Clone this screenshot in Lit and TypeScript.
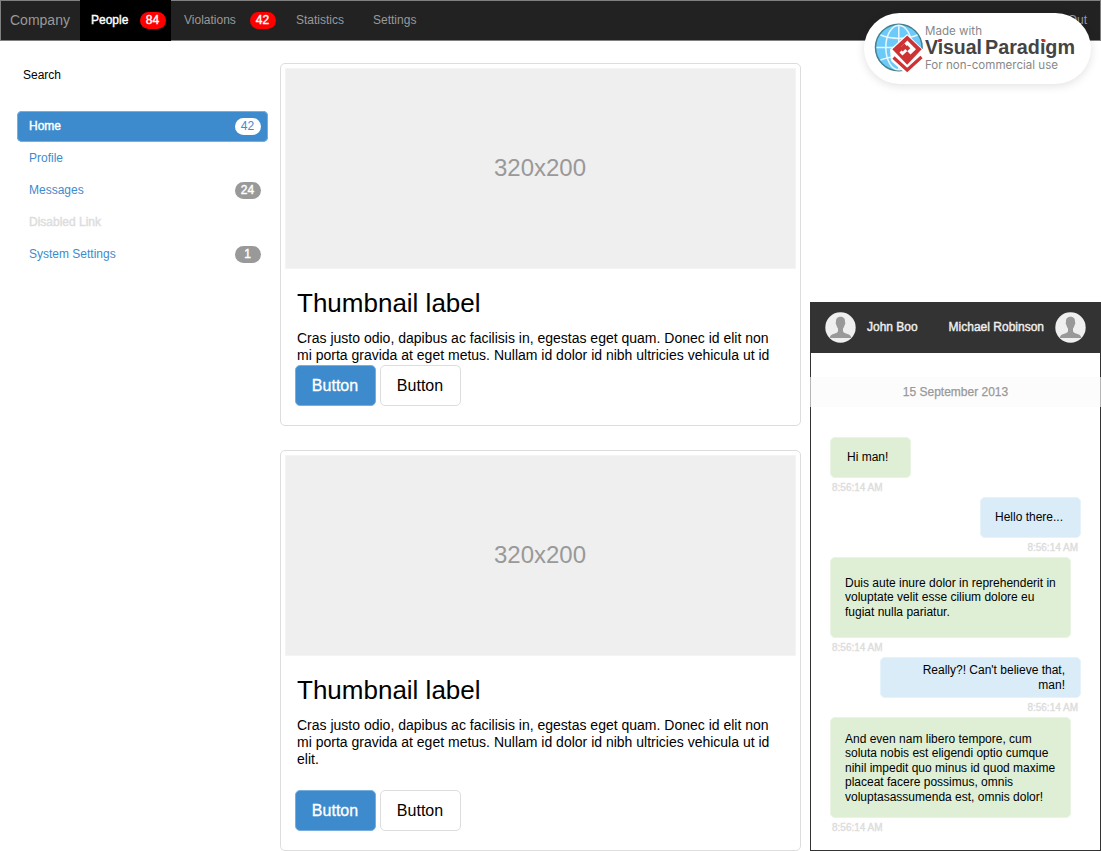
import { LitElement, html, css, svg, nothing } from "lit";
import { customElement, property } from "lit/decorators.js";

@customElement("count-badge")
class CountBadge extends LitElement {
  @property() tone = "gray";
  static styles = css`
    :host { display: block; width: 26px; height: 17px; }
    .badge { box-sizing: border-box; height: 17px; border-radius: 9px; padding-right: 1px; text-align: center; line-height: 17px; font-size: 12px; color: #fff; -webkit-text-stroke: 0.4px #fff; background: #999; }
    .red { background: #f00; }
    .white { background: #fff; color: #3d8bcd; -webkit-text-stroke: 0; }
  `;
  render() { return html`<div class="badge ${this.tone}"><slot></slot></div>`; }
}

@customElement("thumb-card")
class ThumbCard extends LitElement {
  @property({ type: Boolean }) short = false;
  static styles = css`
    :host { display: block; }
    .card { box-sizing: border-box; width: 521px; height: 401px; border: 1px solid #ddd; border-radius: 5px; padding: 4px; background: #fff; display: flex; flex-direction: column; }
    .card.short { height: 363px; }
    .picture { height: 201px; flex: none; background: #efefef; color: #999; font-size: 24px; display: flex; align-items: center; justify-content: center; border: 1px solid #f4f4f4; box-sizing: border-box; padding: 0 1px 1px 0; }
    h2 { margin: 19px 0 0 12px; font-size: 26px; line-height: 30px; font-weight: 400; color: #000; flex: none; }
    p { margin: 12px 0 0 12px; width: 480px; height: 51px; font-size: 14px; line-height: 17px; color: #000; overflow: hidden; flex: none; }
    .short p { height: 34px; }
    .actions { display: flex; gap: 4px; margin: 22px 0 0 10px; }
    .short .actions { margin-top: 1px; }
    .btn { box-sizing: border-box; width: 81px; height: 41px; border: 1px solid #ddd; border-radius: 5px; background: #fff; font: 16px "Liberation Sans", Arial, sans-serif; line-height: 39px; padding: 0 1px 0 0; color: #000; text-align: center; }
    .primary { background: #3d8bcd; border-color: #77aedd; color: #fff; -webkit-text-stroke: 0.3px #fff; }
  `;
  render() {
    return html`<article class="card ${this.short ? "short" : ""}">
      <div class="picture">320x200</div>
      <h2>Thumbnail label</h2>
      <p>Cras justo odio, dapibus ac facilisis in, egestas eget quam. Donec id elit non mi porta gravida at eget metus. Nullam id dolor id nibh ultricies vehicula ut id ${this.short ? nothing : "elit."}</p>
      <div class="actions"><button class="btn primary">Button</button><button class="btn">Button</button></div>
    </article>`;
  }
}

const avatar = html`<svg width="31" height="31" viewBox="0 0 31 31">
  <circle cx="15.5" cy="15.5" r="15.2" fill="#efefef"></circle>
  <path fill="#999" d="M15.5 4.700c3.600 0 4.700 2.400 4.500 5.400.6.6.3 2.400-.4 3-.3 1.600-.9 2.600-1.600 3.300v2.800c.5 1.500 2.500 2 4.500 2.700 2 .8 3.500 1.500 3.700 4H4.800c.2-2.500 1.700-3.200 3.700-4 2-.7 4-1.200 4.500-2.700v-2.800c-.7-.7-1.300-1.700-1.600-3.300-.7-.6-1-2.400-.4-3C10.800 7.100 11.900 4.700 15.500 4.700z"></path>
</svg>`;

const messages = [
  { side: "in", size: "w80 h40 solo", text: "Hi man!" },
  { side: "out", size: "w100 h40", text: "Hello there..." },
  { side: "in", size: "w240 h80", text: "Duis aute inure dolor in reprehenderit in voluptate velit esse cilium dolore eu fugiat nulla pariatur." },
  { side: "out", size: "w200 h40", text: "Really?! Can't believe that, man!" },
  { side: "in", size: "w240 h100", text: "And even nam libero tempore, cum soluta nobis est eligendi optio cumque nihil impedit quo minus id quod maxime placeat facere possimus, omnis voluptasassumenda est, omnis dolor!" },
];

@customElement("chat-panel")
class ChatPanel extends LitElement {
  static styles = css`
    :host { display: block; }
    .panel { box-sizing: border-box; width: 291px; height: 549px; border: 1px solid #333; background: #fff; font-size: 12px; }
    header { box-sizing: border-box; height: 50px; background: #333; padding: 0 14px; display: flex; align-items: center; color: #efefef; -webkit-text-stroke: 0.4px #efefef; }
    header svg { flex: none; margin-bottom: 1px; }
    header span { padding-bottom: 2px; }
    .first { margin-left: 11px; }
    .second { margin: 0 11px 0 auto; }
    .date { height: 30px; line-height: 30px; margin: 24px -1px 30px; background: #fcfcfc; color: #999; text-align: center; -webkit-text-stroke: 0.25px #999; border: solid #b5b5b5; border-width: 0 1px; }
    .log { display: flex; flex-direction: column; padding: 0 19px; }
    .entry { display: flex; flex-direction: column; align-items: flex-start; }
    .entry.out { align-items: flex-end; }
    .bubble { box-sizing: border-box; border-radius: 5px; padding: 0 14px; display: flex; align-items: center; line-height: 14.4px; color: #000; background: #dfefd6; border: 1px solid #e9f4e4; }
    .out .bubble { background: #d9ecf8; border-color: #e6f3fa; text-align: right; }
    .bubble.solo { padding-left: 16px; }
    .w80 { width: 81px; } .w100 { width: 101px; } .w200.bubble { width: 201px; padding: 0 15px 0 30px; } .w240.bubble { width: 241px; padding-right: 12px; }
    .h40 { height: 41px; } .h80 { height: 81px; } .h100.bubble { height: 101px; padding-top: 1px; }
    .time { height: 19px; line-height: 20px; padding: 0 3px 0 2px; font-size: 10px; color: #ddd; -webkit-text-stroke: 0.4px #ddd; }
  `;
  render() {
    return html`<section class="panel">
      <header>${avatar}<span class="first">John Boo</span><span class="second">Michael Robinson</span>${avatar}</header>
      <div class="date">15 September 2013</div>
      <div class="log">${messages.map(m => html`<div class="entry ${m.side}"><div class="bubble ${m.size}"><span>${m.text}</span></div><div class="time">8:56:14 AM</div></div>`)}</div>
    </section>`;
  }
}

const brand = svg`
  <circle cx="34.800" cy="34.500" r="23.300" fill="#6ccaf8" stroke="#45808f" stroke-width="1.500"></circle>
  <g fill="none" stroke="#e8f7ff" stroke-width="1.500">
    <ellipse cx="34.800" cy="34.500" rx="13" ry="22.300"></ellipse>
    <path d="M34.800 12.500v44M12.500 34.500h44M16.500 22c11 4.500 26 4.500 37 0M16.500 47c11-4.500 26-4.500 37 0"></path>
  </g>
  <path d="M43.200 21 59 36.500 59 46 43.200 62 27 48 26 36.500z" fill="#fff"></path>
  <path d="M43.200 22.500 57.700 36.300 43.200 51.800 28.300 36.300z" fill="#cd3334"></path>
  <path d="M43.300 27.500 52 36.300 46.500 41.500 43.300 38.300 46.300 35.300 43.300 32.300 40.500 35.200 43.300 38 38.500 42.500 35.500 39.500 39 36 37 34z" fill="#fff"></path>
  <path d="M40.300 30.500 43.500 33.700 38.800 38.500 35.500 35.500z" fill="#cd3334"></path>
  <path d="M29.500 44.500 43.200 57 57.500 44" fill="none" stroke="#cd3334" stroke-width="3.200"></path>`;

@customElement("app-root")
class AppRoot extends LitElement {
  static styles = css`
    :host { display: block; position: relative; width: 1101px; height: 851px; overflow: hidden; background: #fff; font-family: "Liberation Sans", Arial, sans-serif; font-size: 12px; color: #000; }
    nav { box-sizing: border-box; height: 41px; background: #222; border: 1px solid #808080; display: flex; align-items: stretch; color: #999; line-height: 38px; }
    .logo { width: 79px; padding-left: 9px; box-sizing: border-box; font-size: 14px; line-height: 39px; }
    .item { display: flex; }
    .item count-badge { margin-top: 11px; }
    .people { box-sizing: border-box; width: 91px; margin: -1px 0; padding: 1px 5px 1px 11px; background: #000; color: #fff; -webkit-text-stroke: 0.4px #fff; justify-content: space-between; }
    .violations { width: 92px; margin-left: 13px; justify-content: space-between; }
    .stats { margin-left: 20px; }
    .settings { margin-left: 29px; }
    .sign { margin: 0 13px 0 auto; }
    .body { display: flex; }
    aside { width: 251px; margin: 27px 12px 0 17px; }
    .search { padding-left: 6px; line-height: 14px; margin-bottom: 29px; }
    .links { display: flex; flex-direction: column; gap: 1px; }
    .link { box-sizing: border-box; height: 31px; padding: 0 7px 0 12px; display: flex; align-items: center; justify-content: space-between; color: #3d8bcd; border-radius: 5px; line-height: 29px; }
    .active { background: #3d8bcd; color: #fff; box-shadow: inset 0 0 0 1px #77aedd; }
    .active span { -webkit-text-stroke: 0.4px #fff; }
    .disabled { color: #ddd; -webkit-text-stroke: 0.4px #ddd; }
    main { display: flex; flex-direction: column; gap: 24px; margin-top: 22px; }
    chat-panel { margin: 261px 0 0 9px; }
    .mark { position: absolute; left: 864px; top: 13px; width: 227px; height: 71px; border-radius: 36px; background: #fff; box-shadow: 0 2px 10px rgba(0, 0, 0, 0.12); }
    .mark svg { display: block; }
    .thin { font-family: Inter, sans-serif; font-size: 11.5px; fill: #888; }
    .name { font-family: "Liberation Sans", Arial, sans-serif; font-weight: 700; font-size: 20px; fill: #444; }
    .dot { fill: #cd3334; }
  `;
  render() {
    const link = (text: string, cls = "", count = "", tone = "gray") => html`<div class="link ${cls}"><span>${text}</span>${count ? html`<count-badge tone=${tone}>${count}</count-badge>` : nothing}</div>`;
    return html`
      <nav>
        <span class="logo">Company</span>
        <span class="item people">People<count-badge tone="red">84</count-badge></span>
        <span class="item violations">Violations<count-badge tone="red">42</count-badge></span>
        <span class="stats">Statistics</span><span class="settings">Settings</span><span class="sign">Sign Out</span>
      </nav>
      <div class="body">
        <aside>
          <div class="search">Search</div>
          <div class="links">
            ${link("Home", "active", "42", "white")}${link("Profile")}${link("Messages", "", "24")}${link("Disabled Link", "disabled")}${link("System Settings", "", "1")}
          </div>
        </aside>
        <main><thumb-card short></thumb-card><thumb-card></thumb-card></main>
        <chat-panel></chat-panel>
      </div>
      <div class="mark"><svg width="227" height="71" viewBox="0 0 227 71">${brand}
        <text class="thin" x="61" y="22" textLength="57" lengthAdjust="spacingAndGlyphs">Made with</text>
        <text class="name" x="61" y="41" textLength="57" lengthAdjust="spacingAndGlyphs">Visual</text>
        <text class="name" x="121" y="41" textLength="90" lengthAdjust="spacingAndGlyphs">Paradigm</text>
        <rect class="dot" x="74" y="26.500" width="3.500" height="2.500"></rect>
        <rect class="dot" x="178" y="26.500" width="3.500" height="2.500"></rect>
        <text class="thin" x="61" y="56" textLength="133" lengthAdjust="spacingAndGlyphs">For non-commercial use</text>
      </svg></div>`;
  }
}
